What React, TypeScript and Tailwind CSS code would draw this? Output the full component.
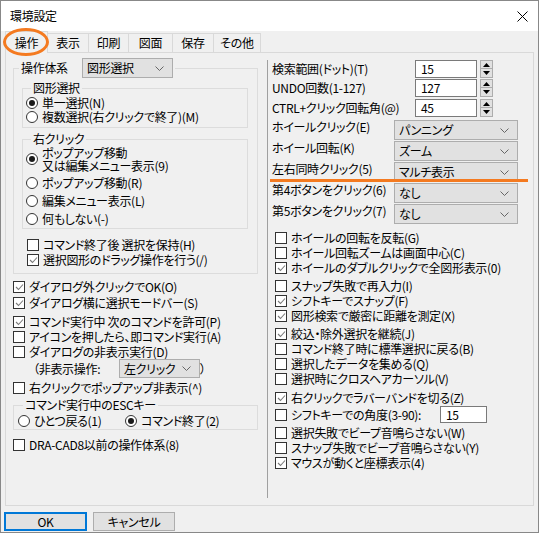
import React from "react";

type P = { on?: boolean; children?: React.ReactNode; className?: string };

function Check({ on }: { on?: boolean }) {
  return (
    <span className="w-[12px] h-[12px] border border-[#333333] bg-white flex items-center justify-center shrink-0">
      {on && (
        <svg width="9" height="8" viewBox="0 0 9 8">
          <path d="M1 4 L3.5 6.5 L8 1.5" fill="none" stroke="#7a7a7a" strokeWidth="1.1" />
        </svg>
      )}
    </span>
  );
}

function Radio({ on }: { on?: boolean }) {
  return (
    <span className="w-[12px] h-[12px] rounded-full border border-[#333333] bg-white flex items-center justify-center shrink-0">
      {on && <span className="w-[6px] h-[6px] rounded-full bg-[#1a1a1a]" />}
    </span>
  );
}

function CheckRow({ on, children, className }: P) {
  return (
    <div className={"flex items-center h-[15px] gap-[4px] " + (className ?? "")}>
      <Check on={on} />
      <span className="whitespace-nowrap">{children}</span>
    </div>
  );
}

function RadioRow({ on, children, className }: P) {
  return (
    <div className={"flex items-center gap-[4px] " + (className ?? "")}>
      <Radio on={on} />
      <span className="whitespace-nowrap">{children}</span>
    </div>
  );
}

function Chevron() {
  return (
    <svg width="9" height="5" viewBox="0 0 9 5" className="shrink-0">
      <path d="M0.5 0.5 L4.5 4.5 L8.5 0.5" fill="none" stroke="#666666" strokeWidth="1" />
    </svg>
  );
}

function Select({ value, className }: { value: string; className?: string }) {
  return (
    <div
      className={
        "bg-[#e1e1e1] border border-[#adadad] flex items-center justify-between pl-[4px] pr-[8px] " +
        (className ?? "")
      }
    >
      <span className="whitespace-nowrap">{value}</span>
      <Chevron />
    </div>
  );
}

function Spinner() {
  return (
    <div className="flex flex-col w-[13px] h-[18px] ml-[3px]">
      <div className="h-[9px] bg-[#e1e1e1] border border-[#adadad] flex items-center justify-center">
        <svg width="7" height="4" viewBox="0 0 7 4">
          <path d="M3.5 0 L7 4 L0 4 Z" fill="#000" />
        </svg>
      </div>
      <div className="h-[9px] bg-[#e1e1e1] border border-t-0 border-[#adadad] flex items-center justify-center">
        <svg width="7" height="4" viewBox="0 0 7 4">
          <path d="M0 0 L7 0 L3.5 4 Z" fill="#000" />
        </svg>
      </div>
    </div>
  );
}

function NumRow({ label, value, className }: { label: string; value: string; className?: string }) {
  return (
    <div className={"flex items-center h-[18px] " + (className ?? "")}>
      <span className="w-[143px] whitespace-nowrap">{label}</span>
      <div className="w-[62px] h-[18px] bg-white border border-[#7a7a7a] flex items-center pl-[5px]">{value}</div>
      <Spinner />
    </div>
  );
}

function SelRow({ label, value, className }: { label: string; value: string; className?: string }) {
  return (
    <div className={"flex items-start h-[20px] " + (className ?? "")}>
      <span className="w-[122px] whitespace-nowrap leading-[14px]">{label}</span>
      <Select value={value} className="w-[124px] h-[20px]" />
    </div>
  );
}

const tabBase = "h-[19px] bg-[#f0f0f0] border-t border-l border-r border-[#d9d9d9] flex items-center justify-center ml-[-1px]";

export default function App() {
  return (
    <div className="relative w-[539px] h-[533px] bg-[#f0f0f0] border border-[#888888] flex flex-col text-[12px] leading-[14px] tracking-[-0.3px] [font-feature-settings:'palt'] text-black font-['Noto_Sans_CJK_JP',sans-serif] overflow-hidden">
      {/* title bar */}
      <div className="h-[30px] bg-white flex items-center pl-[9px] pr-[10px] shrink-0">
        <span>環境設定</span>
        <svg width="11" height="11" viewBox="0 0 11 11" className="ml-auto">
          <path d="M0.5 0.5 L10.5 10.5 M10.5 0.5 L0.5 10.5" stroke="#000" strokeWidth="1" />
        </svg>
      </div>

      {/* tabs */}
      <div className="flex items-end h-[21px] pl-[5px] shrink-0">
        <div className="relative z-10 w-[43px] h-[22px] mb-[-1px] bg-[#f0f0f0] border-t border-l border-r border-[#d9d9d9] flex items-center justify-center ml-[-1px]">
          操作
        </div>
        <div className={tabBase + " w-[42px]"}>表示</div>
        <div className={tabBase + " w-[41px]"}>印刷</div>
        <div className={tabBase + " w-[45px]"}>図面</div>
        <div className={tabBase + " w-[42px]"}>保存</div>
        <div className={tabBase + " w-[48px]"}>その他</div>
      </div>

      {/* panel */}
      <div className="mx-[4px] h-[454px] border border-[#d9d9d9] flex items-stretch shrink-0">
        {/* left column */}
        <div className="ml-[7px] w-[245px] pt-[5px] flex flex-col">
          <fieldset className="border border-[#dcdcdc] pb-[6px]">
            <legend className="ml-[5px] px-[2px]">
              <div className="flex items-center h-[20px]">
                <span className="w-[61px] whitespace-nowrap">操作体系</span>
                <Select value="図形選択" className="w-[91px] h-[20px]" />
              </div>
            </legend>
            <fieldset className="mt-[3px] ml-[8px] mr-[9px] border border-[#dcdcdc] pt-[1px] pb-[3px] pl-[3px]">
              <legend className="ml-[5px] px-[2px] h-[14px] leading-[14px]">図形選択</legend>
              <RadioRow on className="h-[14px]">単一選択(N)</RadioRow>
              <RadioRow className="h-[14px]">複数選択(右クリックで終了)(M)</RadioRow>
            </fieldset>
            <fieldset className="mt-[4px] ml-[8px] mr-[9px] border border-[#dcdcdc] pb-[1px] pl-[3px]">
              <legend className="ml-[5px] px-[2px] h-[14px] leading-[14px]">右クリック</legend>
              <RadioRow on className="h-[26px]">
                <span className="block leading-[13px]">
                  ポップアップ移動
                  <br />
                  又は編集メニュー表示(9)
                </span>
              </RadioRow>
              <RadioRow className="mt-[2px] h-[18px]">ポップアップ移動(R)</RadioRow>
              <RadioRow className="h-[18px]">編集メニュー表示(L)</RadioRow>
              <RadioRow className="h-[17px]">何もしない(-)</RadioRow>
            </fieldset>
            <div className="mt-[8px] pl-[13px] flex flex-col">
              <CheckRow>コマンド終了後 選択を保持(H)</CheckRow>
              <CheckRow on>選択図形のドラッグ操作を行う(/)</CheckRow>
            </div>
          </fieldset>

          <div className="mt-[5px] flex flex-col">
            <CheckRow on className="h-[16px]">ダイアログ外クリックでOK(O)</CheckRow>
            <CheckRow on className="h-[16px]">ダイアログ横に選択モードバー(S)</CheckRow>
            <CheckRow on className="mt-[3px]">コマンド実行中 次のコマンドを許可(P)</CheckRow>
            <CheckRow>アイコンを押したら、即コマンド実行(A)</CheckRow>
            <CheckRow>ダイアログの非表示実行(D)</CheckRow>
            <div className="flex items-center h-[19px] pl-[20px]">
              <span className="w-[86px] whitespace-nowrap">（非表示操作:</span>
              <Select value="左クリック" className="w-[81px] h-[19px]" />
              <span>）</span>
            </div>
            <CheckRow className="mt-[2px]">右クリックでポップアップ非表示(^)</CheckRow>
          </div>

          <fieldset className="mt-[3px] border border-[#dcdcdc] pt-[2px] pb-[1px] pl-[4px]">
            <legend className="ml-[5px] px-[2px] h-[14px] leading-[14px]">コマンド実行中のESCキー</legend>
            <div className="flex items-center h-[14px]">
              <RadioRow className="w-[107px]">ひとつ戻る(1)</RadioRow>
              <RadioRow on>コマンド終了(2)</RadioRow>
            </div>
          </fieldset>

          <CheckRow className="mt-[7px]">DRA-CAD8以前の操作体系(8)</CheckRow>
        </div>

        {/* separator */}
        <div className="ml-[9px] my-[7px] w-px bg-[#a0a0a0]" />

        {/* right column */}
        <div className="pl-[4px] pt-[7px] flex flex-col">
          <NumRow label="検索範囲(ドット)(T)" value="15" />
          <NumRow className="mt-[1px]" label="UNDO回数(1-127)" value="127" />
          <NumRow className="mt-[2px]" label="CTRL+クリック回転角(@)" value="45" />
          <SelRow className="mt-[3px]" label="ホイールクリック(E)" value="パンニング" />
          <SelRow className="mt-[1px]" label="ホイール回転(K)" value="ズーム" />
          <SelRow className="mt-[1px]" label="左右同時クリック(5)" value="マルチ表示" />
          <SelRow className="mt-[1px]" label="第4ボタンをクリック(6)" value="なし" />
          <SelRow className="mt-[1px]" label="第5ボタンをクリック(7)" value="なし" />

          <div className="mt-[6px] pl-[3px] flex flex-col">
            <CheckRow>ホイールの回転を反転(G)</CheckRow>
            <CheckRow>ホイール回転ズームは画面中心(C)</CheckRow>
            <CheckRow on>ホイールのダブルクリックで全図形表示(0)</CheckRow>

            <CheckRow className="mt-[3px]">スナップ失敗で再入力(I)</CheckRow>
            <CheckRow on>シフトキーでスナップ(F)</CheckRow>
            <CheckRow on>図形検索で厳密に距離を測定(X)</CheckRow>

            <CheckRow on className="mt-[3px]">絞込・除外選択を継続(J)</CheckRow>
            <CheckRow>コマンド終了時に標準選択に戻る(B)</CheckRow>
            <CheckRow>選択したデータを集める(Q)</CheckRow>
            <CheckRow>選択時にクロスヘアカーソル(V)</CheckRow>

            <CheckRow on className="mt-[4px]">右クリックでラバーバンドを切る(Z)</CheckRow>
            <div className="mt-[1px] flex items-center h-[17px] gap-[4px]">
              <Check />
              <span className="w-[145px] whitespace-nowrap">シフトキーでの角度(3-90):</span>
              <div className="w-[47px] h-[17px] bg-white border border-[#7a7a7a] flex items-center pl-[5px]">15</div>
            </div>

            <CheckRow className="mt-[2px]">選択失敗でビープ音鳴らさない(W)</CheckRow>
            <CheckRow>スナップ失敗でビープ音鳴らさない(Y)</CheckRow>
            <CheckRow on>マウスが動くと座標表示(4)</CheckRow>
          </div>
        </div>
      </div>

      {/* buttons */}
      <div className="mt-[6px] pl-[3px] flex gap-[6px]">
        <div className="w-[83px] h-[19px] bg-[#e1e1e1] border-2 border-[#0078d7] flex items-center justify-center">OK</div>
        <div className="w-[82px] h-[19px] bg-[#e1e1e1] border border-[#adadad] flex items-center justify-center">キャンセル</div>
      </div>

      {/* annotations */}
      <div className="absolute z-20 left-[2px] top-[27px] w-[46px] h-[28px] rounded-[50%] border-[3px] border-[#f47a20] pointer-events-none" />
      <div className="absolute z-20 left-[269px] top-[178px] w-[258px] h-[3px] bg-[#f47a20] pointer-events-none" />
    </div>
  );
}
